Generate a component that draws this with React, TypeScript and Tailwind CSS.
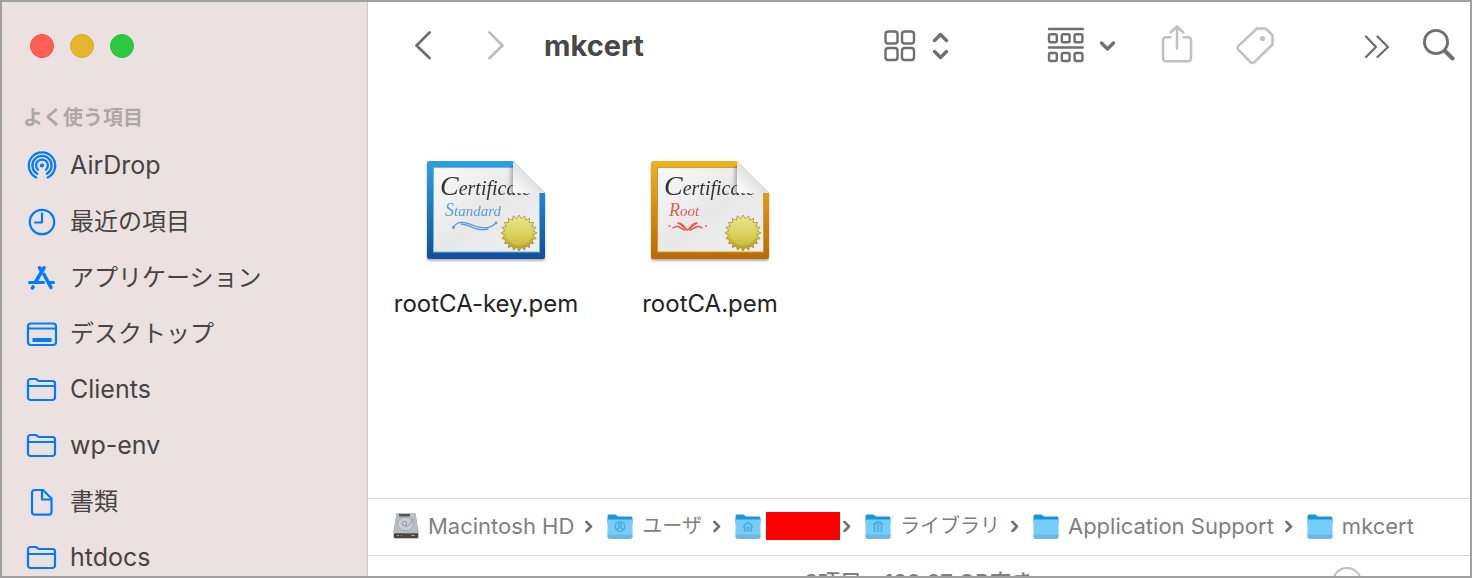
import { Fragment, type ReactNode } from 'react';

type IconName = 'airdrop' | 'recents' | 'apps' | 'desktop' | 'folder' | 'document';
type Emblem = 'users' | 'home' | 'library' | 'none';

const sidebarItems: { name: string; icon: IconName; latin?: boolean }[] = [
  { name: 'AirDrop', icon: 'airdrop', latin: true },
  { name: '最近の項目', icon: 'recents' },
  { name: 'アプリケーション', icon: 'apps' },
  { name: 'デスクトップ', icon: 'desktop' },
  { name: 'Clients', icon: 'folder', latin: true },
  { name: 'wp-env', icon: 'folder', latin: true },
  { name: '書類', icon: 'document' },
  { name: 'htdocs', icon: 'folder', latin: true },
];

const pathItems: { name: string; emblem?: Emblem; disk?: boolean; latin?: boolean; hidden?: boolean }[] = [
  { name: 'Macintosh HD', disk: true, latin: true },
  { name: 'ユーザ', emblem: 'users' },
  { name: 'ホーム', emblem: 'home', hidden: true },
  { name: 'ライブラリ', emblem: 'library' },
  { name: 'Application Support', emblem: 'none', latin: true },
  { name: 'mkcert', emblem: 'none', latin: true },
];

const sidebarShapes: Record<IconName, ReactNode> = {
  airdrop: (
    <>
      <path d="M10.3 27.5a13.2 13.2 0 1 1 11.4 0" />
      <path d="M11.2 23.8a9.6 9.6 0 1 1 9.6 0" />
      <path d="M12 19.8a5.9 5.9 0 1 1 8 0" />
      <circle cx="16" cy="15.5" r="2.1" fill="currentColor" stroke="none" />
    </>
  ),
  recents: (
    <>
      <circle cx="16" cy="16" r="12.2" />
      <path d="M16 7.5v9H9" />
    </>
  ),
  apps: (
    <g strokeWidth="3.6">
      <path d="M18 5.8 9.5 20" />
      <path d="M13.5 5.8 15.5 9" />
      <path d="M18 12.5 25 25.5" />
      <path d="M3.5 20.6h14M22.5 20.6h5" strokeWidth="3" />
      <path d="M7 25 6.300 26" />
    </g>
  ),
  desktop: (
    <>
      <rect x="2" y="5.5" width="28" height="21.5" rx="3" />
      <path d="M2 10.5h28" />
      <rect x="6.5" y="20" width="19" height="4" fill="currentColor" stroke="none" />
    </>
  ),
  folder: (
    <>
      <path d="M2 23.5V7.5A2.5 2.5 0 0 1 4.5 5h5c1.2 0 2 2 3.5 2h13.5A2.5 2.5 0 0 1 29 9.5v14a2.5 2.5 0 0 1-2.5 2.5h-22A2.5 2.5 0 0 1 2 23.5z" />
      <path d="M2 12h27" />
    </>
  ),
  document: (
    <>
      <path d="M8.6 4H17l8.500 8.500V26a2.700 2.700 0 0 1-2.700 2.700H8.700A2.700 2.700 0 0 1 6 26V6.600A2.600 2.600 0 0 1 8.600 4z" />
      <path d="M16 4v9.5h9" />
    </>
  ),
};

function SidebarIcon({ name }: { name: IconName }) {
  return (
    <svg
      viewBox="0 0 32 32"
      className="size-8 shrink-0 text-[#007aff]"
      fill="none"
      stroke="currentColor"
      strokeWidth="2.2"
      strokeLinecap="round"
      strokeLinejoin="round"
      aria-hidden="true"
    >
      {sidebarShapes[name]}
    </svg>
  );
}

function Sidebar() {
  return (
    <aside className="w-[366px] shrink-0 overflow-hidden border-r border-[#d2cbca] bg-[#eae1e0]">
      <div className="flex h-[88px] items-center gap-4 pl-7">
        <button aria-label="閉じる" className="size-6 rounded-full border border-[#e8504a] bg-[#ff5f57]" />
        <button aria-label="しまう" className="size-6 rounded-full border border-[#dba820] bg-[#e5b52b]" />
        <button aria-label="拡大" className="size-6 rounded-full border border-[#29bd3b] bg-[#2cc840]" />
      </div>
      <h2 className="mt-2 h-10 pl-[21px] text-[20px] leading-10 font-bold text-[#aea7a6]">よく使う項目</h2>
      <nav>
        {sidebarItems.map((item) => (
          <a key={item.name} href="#" className="flex h-14 items-center gap-3 pl-6 text-[#464443]">
            <SidebarIcon name={item.icon} />
            <span className={item.latin ? 'text-[25px]' : 'text-[24px]'}>{item.name}</span>
          </a>
        ))}
      </nav>
    </aside>
  );
}

function Toolbar() {
  return (
    <header className="flex h-[88px] shrink-0 items-center pr-[15px] pl-[46px] text-[#6f6f6f]">
      <button aria-label="戻る" className="mr-[55px]">
        <svg width="18" height="30" viewBox="0 0 18 30" fill="none" stroke="currentColor" strokeWidth="2.800" strokeLinecap="round" strokeLinejoin="round">
          <path d="M15.5 1.500 2.500 14.500l13 12.500" />
        </svg>
      </button>
      <button aria-label="進む" className="mr-[39px] text-[#bdbdbd]">
        <svg width="18" height="30" viewBox="0 0 18 30" fill="none" stroke="currentColor" strokeWidth="2.800" strokeLinecap="round" strokeLinejoin="round">
          <path d="m2.500 1.500 13 13-13 12.500" />
        </svg>
      </button>
      <h1 className="text-[29px] font-bold text-[#4a4847]">mkcert</h1>

      <div className="ml-auto flex items-center">
        <button aria-label="表示" className="mr-[98px] flex items-center gap-4">
          <svg width="32" height="32" viewBox="0 0 32 32" fill="none" stroke="currentColor" strokeWidth="2.400">
            <rect x="1.500" y="1.500" width="12" height="12" rx="2.800" />
            <rect x="18" y="1.500" width="12" height="12" rx="2.800" />
            <rect x="1.500" y="18" width="12" height="12" rx="2.800" />
            <rect x="18" y="18" width="12" height="12" rx="2.800" />
          </svg>
          <svg width="17" height="30" viewBox="0 0 17 30" fill="none" stroke="currentColor" strokeWidth="3.400" strokeLinecap="round" strokeLinejoin="round">
            <path d="m2.500 9.500 6-6 6 6M2.500 20.500l6 6 6-6" />
          </svg>
        </button>
        <button aria-label="グループ分け" className="mr-[45px] flex items-center gap-[15px]">
          <svg width="37" height="38" viewBox="0 0 37 38" fill="none" stroke="currentColor" strokeWidth="2.400">
            <path d="M2 2h34M2 20.500h34" strokeLinecap="round" />
            <rect x="2" y="7.300" width="7.800" height="8" rx="1.500" />
            <rect x="14.800" y="7.300" width="7.800" height="8" rx="1.500" />
            <rect x="27.600" y="7.300" width="7.800" height="8" rx="1.500" />
            <rect x="2" y="26" width="7.800" height="8" rx="1.500" />
            <rect x="14.800" y="26" width="7.800" height="8" rx="1.500" />
            <rect x="27.600" y="26" width="7.800" height="8" rx="1.500" />
          </svg>
          <svg width="17" height="12" viewBox="0 0 17 12" fill="none" stroke="currentColor" strokeWidth="3.400" strokeLinecap="round" strokeLinejoin="round">
            <path d="m2.500 3 6 6 6-6" />
          </svg>
        </button>
        <button aria-label="共有" className="mr-[42px] text-[#c0c0c0]">
          <svg width="32" height="42" viewBox="0 0 32 42" fill="none" stroke="currentColor" strokeWidth="2.500" strokeLinecap="round" strokeLinejoin="round">
            <path d="M9.500 12.200H5a3 3 0 0 0-3 3v18a3 3 0 0 0 3 3h22a3 3 0 0 0 3-3v-18a3 3 0 0 0-3-3h-4.500" />
            <path d="M16 23.500V2M9.800 7.500 16 1.500l6.200 6" />
          </svg>
        </button>
        <button aria-label="タグ" className="mr-[89px] text-[#c0c0c0]">
          <svg width="40" height="40" viewBox="0 1 40 40" fill="none" stroke="currentColor" strokeWidth="2.500" strokeLinejoin="round">
            <path d="M22 3.500h8.500L37.500 10v9.500L19.500 37q-2 2-4 0L3.500 24.800q-2-2 0-4z" />
            <circle cx="27.500" cy="13.500" r="2.600" fill="currentColor" stroke="none" />
          </svg>
        </button>
        <button aria-label="さらに表示" className="mr-[33px]">
          <svg width="26" height="24" viewBox="0 0 26 24" fill="none" stroke="currentColor" strokeWidth="2.300" strokeLinecap="round" strokeLinejoin="round">
            <path d="M2 2.500 12 13 2 23M13.500 2.500 24 13 13.500 23" />
          </svg>
        </button>
        <button aria-label="検索">
          <svg width="32" height="34" viewBox="0 0 32 34" fill="none" stroke="currentColor" strokeLinecap="round">
            <circle cx="13" cy="13" r="11.600" strokeWidth="2.800" />
            <path d="m22 22 7.500 7.500" strokeWidth="4" />
          </svg>
        </button>
      </div>
    </header>
  );
}

// 20-pointed star for the gold seal
const sealPoints = Array.from({ length: 40 }, (_, i) => {
  const r = i % 2 ? 14.5 : 18;
  const a = (i * Math.PI) / 20;
  return `${(97 + r * Math.sin(a)).toFixed(1)},${(76 - r * Math.cos(a)).toFixed(1)}`;
}).join(' ');

function Certificate({ kind }: { kind: 'standard' | 'root' }) {
  const root = kind === 'root';
  const ink = root ? '#e8564c' : '#5b9bd5';
  return (
    <svg width="128" height="112" viewBox="0 0 128 112" className="drop-shadow-[0_2px_1px_rgba(0,0,0,0.3)]" aria-hidden="true">
      <defs>
        <linearGradient id={`${kind}-frame`} x1="0" y1="0" x2="0" y2="1">
          <stop offset="0" stopColor={root ? '#edb321' : '#2e9fe4'} />
          <stop offset="1" stopColor={root ? '#b86a00' : '#124f98'} />
        </linearGradient>
        <linearGradient id={`${kind}-paper`} x1="0" y1="0" x2="1" y2="1">
          <stop offset="0" stopColor="#fafafa" />
          <stop offset="0.5" stopColor="#e8e8e8" />
          <stop offset="1" stopColor="#efefef" />
        </linearGradient>
        <linearGradient id={`${kind}-fold`} x1="0" y1="1" x2="0.5" y2="0.5">
          <stop offset="0" stopColor="#ffffff" />
          <stop offset="0.5" stopColor="#f1f1f1" />
          <stop offset="1" stopColor="#e0e0e0" />
        </linearGradient>
        <linearGradient id={`${kind}-shade`} x1="0" y1="0" x2="1" y2="0">
          <stop offset="0" stopColor="#000" stopOpacity="0" />
          <stop offset="1" stopColor="#000" stopOpacity="0.25" />
        </linearGradient>
        <linearGradient id={`${kind}-seal`} x1="0" y1="0" x2="0" y2="1">
          <stop offset="0" stopColor="#efeb9c" />
          <stop offset="0.5" stopColor="#d8cf55" />
          <stop offset="1" stopColor="#b39a1c" />
        </linearGradient>
        <clipPath id={`${kind}-clip`}>
          <path d="M5 4h86l32 32v66H5z" />
        </clipPath>
      </defs>
      <path
        d="M7.500 4H91l32 32v63.500a2.500 2.500 0 0 1-2.500 2.500h-113A2.500 2.500 0 0 1 5 99.500v-93A2.500 2.500 0 0 1 7.500 4z"
        fill={`url(#${kind}-frame)`}
      />
      <g clipPath={`url(#${kind}-clip)`}>
        <rect x="11.500" y="10.500" width="106" height="84.500" fill={`url(#${kind}-paper)`} stroke={root ? '#d59a2a' : '#6fb2e4'} />
        <text x="18" y="38" fill="#333" fontFamily="'Liberation Serif', serif" fontStyle="italic" fontSize="20">
          <tspan fontSize="28">C</tspan>ertificate
        </text>
        <text x="23" y="59" fill={ink} fontFamily="'Liberation Serif', serif" fontStyle="italic" fontSize="15">
          <tspan fontSize="18">{root ? 'R' : 'S'}</tspan>
          {root ? 'oot' : 'tandard'}
        </text>
      </g>
      {root ? (
        <g fill="none" stroke={ink} strokeWidth="1.400" strokeLinecap="round">
          <path d="M41.500 73c-3-1-4-8-10-7 4 0 5 5 10 7 5-2 6-7 10-7-6-1-7 6-10 7z" />
          <path d="M27 71c5-4 8 1 12 2M56 71c-5-4-8 1-12 2M23 69h1M59.500 69h1" />
        </g>
      ) : (
        <g fill="none" stroke={ink} strokeWidth="1.300" strokeLinecap="round">
          <path d="M31 71c5-9 14-5 22-2s15 3 21-3" />
          <path d="M39 67c9 0 14 8 27 5" />
          <circle cx="74" cy="66" r="0.800" fill={ink} />
          <circle cx="31.500" cy="70.500" r="0.800" fill={ink} />
        </g>
      )}
      <polygon points={sealPoints} fill={`url(#${kind}-seal)`} stroke="#a08f2c" strokeWidth="0.800" />
      <circle cx="97" cy="76" r="12.500" fill="#e6de72" opacity="0.350" />
      <path d="M91 8v28l-5-2V12z" fill={`url(#${kind}-shade)`} />
      <path d="M91 4l32 32H91z" fill={`url(#${kind}-fold)`} />
    </svg>
  );
}

function FileItem({ name, kind }: { name: string; kind: 'standard' | 'root' }) {
  return (
    <button className="flex w-56 flex-col items-center">
      <Certificate kind={kind} />
      <span className="mt-[17px] text-[24px] leading-9 text-[#232323]">{name}</span>
    </button>
  );
}

function DiskIcon() {
  return (
    <svg width="26" height="28" viewBox="0 0 26 28" className="shrink-0" aria-hidden="true">
      <path d="M3.500 1.500h19l3 18v5.500a1.500 1.500 0 0 1-1.500 1.500H2A1.500 1.500 0 0 1 .5 25v-5.500z" fill="#8e9295" />
      <path d="M3.500 1h19l3 20H.5z" fill="#b9bdc0" />
      <path d="M1 21.500h24V25a1 1 0 0 1-1 1H2a1 1 0 0 1-1-1z" fill="#4b4542" />
      <path d="M6 2h11v2.500H6z" fill="#55585b" />
      <ellipse cx="12.500" cy="12" rx="8" ry="6.700" fill="#c9ced3" stroke="#a3a9ae" />
      <circle cx="11.500" cy="11.500" r="2.200" fill="none" stroke="#8b98a6" />
      <path d="M12 14.500Q18 14 19.500 7" stroke="#8999a9" fill="none" />
      <path d="M4 23.500h2M8 23.500h1M18 23.500h4" stroke="#a49c96" />
    </svg>
  );
}

function FolderIcon({ emblem }: { emblem: Emblem }) {
  return (
    <svg width="26" height="28" viewBox="0 0 26 28" className="shrink-0" aria-hidden="true">
      <path d="M.5 4A1.500 1.500 0 0 1 2 2.500h6.500l2.500 2h13A1.500 1.500 0 0 1 25.500 6v5H.5z" fill="#1b94db" />
      <path d="M.5 7.500h25v17A1.500 1.500 0 0 1 24 26H2a1.500 1.500 0 0 1-1.500-1.500z" fill="#76cdfa" />
      <path d="M.5 22.500h25v2A1.500 1.500 0 0 1 24 26H2a1.500 1.500 0 0 1-1.500-1.500z" fill="#62bbe9" />
      <path d="M1.500 26.500h23" stroke="#98aab5" />
      <g fill="none" stroke="#43a6da" strokeWidth="1.200">
        {emblem === 'users' && (
          <>
            <circle cx="13" cy="14.500" r="4.800" />
            <circle cx="13" cy="13.300" r="1.600" />
            <path d="M10 17.500q3-3.500 6 0" />
          </>
        )}
        {emblem === 'home' && <path d="m8 15 5-5 5 5M9.500 14v5H12v-3.500h2V19h2.500v-5" />}
        {emblem === 'library' && <path d="M8.500 12 13 9.500l4.500 2.500zM9.500 13v5M13 13v5M16.500 13v5M8 19h10" />}
      </g>
    </svg>
  );
}

function PathBar() {
  return (
    <nav className="flex h-[58px] shrink-0 items-center overflow-hidden border-y border-[#d9d9d9] pb-0.5 pl-[25px] text-[#808080]">
      {pathItems.map((item, i) => (
        <Fragment key={item.name}>
          {i > 0 && (
            <svg
              width="8"
              height="14"
              viewBox="0 0 8 14"
              className={`mr-[14px] shrink-0 ${pathItems[i - 1].hidden ? 'ml-[3px]' : 'ml-[11px]'}`}
              fill="none"
              stroke="#737373"
              strokeWidth="2.600"
              strokeLinecap="round"
              strokeLinejoin="round"
              aria-hidden="true"
            >
              <path d="m1.500 3 4.500 4.500L1.500 12" />
            </svg>
          )}
          <a href="#" className={`flex shrink-0 items-center ${item.hidden ? 'gap-[5px]' : 'gap-[9px]'}`}>
            {item.disk ? <DiskIcon /> : <FolderIcon emblem={item.emblem ?? 'none'} />}
            {item.hidden ? (
              <span aria-label={item.name} className="h-7 w-[74px] bg-[#ff0000]" />
            ) : (
              <span className={item.latin ? 'text-[22px]' : 'text-[20px]'}>{item.name}</span>
            )}
          </a>
        </Fragment>
      ))}
    </nav>
  );
}

function StatusBar() {
  return (
    <footer className="h-5 shrink-0 overflow-hidden">
      <div className="grid h-[52px] grid-cols-[1fr_auto_1fr] items-center">
        <span />
        <p className="text-[22px] font-medium text-[#808080]">2項目、199.97 GB空き</p>
        <input
          type="range"
          aria-label="アイコンサイズ"
          defaultValue={20}
          className="mr-5 h-[30px] w-[140px] appearance-none justify-self-end bg-transparent [&::-webkit-slider-thumb]:size-[30px] [&::-webkit-slider-thumb]:appearance-none [&::-webkit-slider-thumb]:rounded-full [&::-webkit-slider-thumb]:border-2 [&::-webkit-slider-thumb]:border-[#bdbdbd] [&::-webkit-slider-thumb]:bg-white"
        />
      </div>
    </footer>
  );
}

export default function App() {
  return (
    <div className="flex h-screen overflow-hidden border-2 border-[#a0a0a0] bg-white font-['Inter','Noto_Sans_CJK_JP',sans-serif]">
      <Sidebar />
      <main className="flex min-w-0 flex-1 flex-col">
        <Toolbar />
        <section className="flex flex-1 items-start overflow-hidden pt-[67px] pl-[6px]">
          <FileItem name="rootCA-key.pem" kind="standard" />
          <FileItem name="rootCA.pem" kind="root" />
        </section>
        <PathBar />
        <StatusBar />
      </main>
    </div>
  );
}
